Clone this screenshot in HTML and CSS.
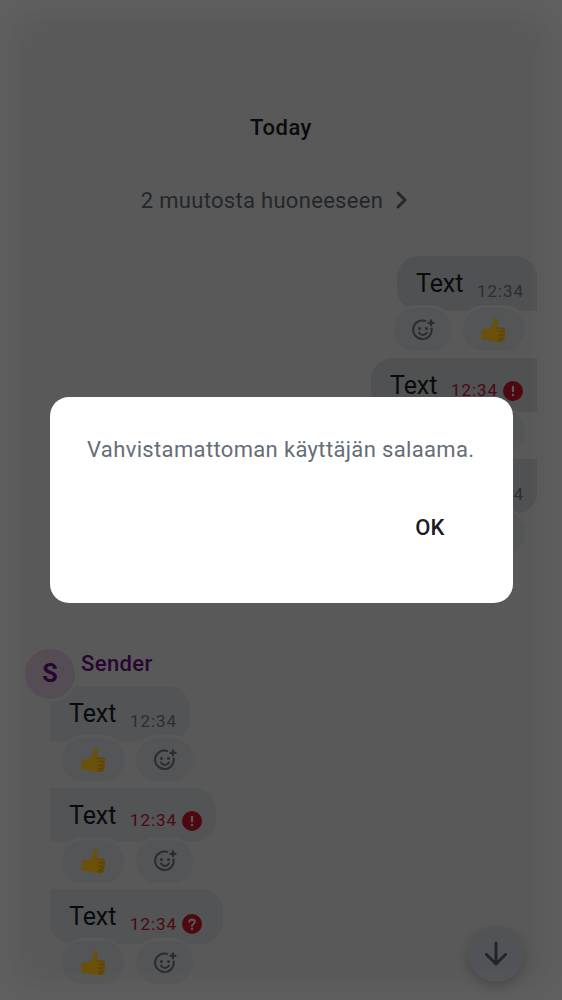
FILE: index.html
```html
<!DOCTYPE html>
<html lang="fi">
<head>
<meta charset="utf-8">
<title>Timeline</title>
<link rel="stylesheet" href="styles.css">
</head>
<body>
<svg class="defs" aria-hidden="true">
  <symbol id="react" viewBox="0 0 24 24">
    <path d="M15 3.200A9.300 9.300 0 1 0 20.500 9.800" fill="none" stroke="currentColor" stroke-width="2" stroke-linecap="butt"/>
    <circle cx="8.500" cy="10.500" r="1.500" fill="currentColor"/>
    <circle cx="15.500" cy="10.500" r="1.500" fill="currentColor"/>
    <path d="M8 14.500Q9.400 17 12 17T16 14.500" fill="none" stroke="currentColor" stroke-width="1.900" stroke-linecap="round"/>
    <path d="M20 2.300v5M17.500 4.800h5" fill="none" stroke="currentColor" stroke-width="2.200" stroke-linecap="round"/>
  </symbol>
  <symbol id="thumb" viewBox="0 0 24 26">
    <path d="M.8 13.500Q.4 12.400 1.500 12.300L7 12.500Q11.500 9.600 12.500 6.300L12.800 2Q13.200.3 14.900 1.100C17.300 2.500 17.200 6.800 15.700 10.400L22 10.700Q24.600 11.500 23.800 14.100Q25 15.300 23.800 17.500Q24.600 19.400 23.100 20.800Q23.800 22.600 22.200 24Q21.400 25 19.500 25H14Q10 24.800 7.500 22.800L1.800 23Q.4 23 .5 20Z" fill="#6a5009"/>
    <path d="M15.800 11.100h5.700q2 .1 2 1.500t-1.800 1.500h-4M17.500 14.900h4.600q1.500.1 1.500 1.300t-1.600 1.500h-4.300M17.400 18.700h4.200q1.500.2 1.400 1.400t-1.700 1.300h-3.600M17.300 22.200h3.500q1.200.2 1 1t-1.300.8H16" fill="none" stroke="#584007" stroke-width=".8"/>
  </symbol>
  <symbol id="error" viewBox="0 0 20 20">
    <circle cx="10" cy="10" r="10" fill="#4d0810"/>
    <path d="M10 5.800v4.400" stroke="#585b5e" stroke-width="2.200" stroke-linecap="round"/>
    <circle cx="10" cy="14" r="1.250" fill="#585b5e"/>
  </symbol>
  <symbol id="help" viewBox="0 0 20 20">
    <circle cx="10" cy="10" r="10" fill="#4d0810"/>
    <path d="M7.300 7.700Q7.700 5.400 10 5.400C13.700 5.500 13.300 8.800 11.400 10Q10.100 10.800 10 12" fill="none" stroke="#585b5e" stroke-width="2" stroke-linecap="round"/>
    <circle cx="10" cy="14.800" r="1.250" fill="#585b5e"/>
  </symbol>
</svg>
<div class="screen">
  <main class="timeline">
    <h1 class="day">Today</h1>
    <div class="changes"><span>2 muutosta huoneeseen</span>
      <svg class="chevron" viewBox="0 0 12 18"><path d="M2 2l7 7-7 7" fill="none" stroke="currentColor" stroke-width="3" stroke-linecap="round" stroke-linejoin="round"/></svg>
    </div>
    <section class="group outgoing">
      <article class="message">
        <div class="bubble first"><span class="body">Text</span><time>12:34</time></div>
        <div class="reactions"><span class="pill add"><svg><use href="#react"/></svg></span><span class="pill like"><svg><use href="#thumb"/></svg></span></div>
      </article>
      <article class="message">
        <div class="bubble middle failed"><span class="body">Text</span><time>12:34</time><svg class="status"><use href="#error"/></svg></div>
        <div class="reactions"><span class="pill add"><svg><use href="#react"/></svg></span><span class="pill like"><svg><use href="#thumb"/></svg></span></div>
      </article>
      <article class="message">
        <div class="bubble last"><span class="body">Text</span><time>12:34</time></div>
        <div class="reactions"><span class="pill add"><svg><use href="#react"/></svg></span><span class="pill like"><svg><use href="#thumb"/></svg></span></div>
      </article>
    </section>
    <section class="group incoming">
      <header class="sender"><span class="avatar">S</span><span class="name">Sender</span></header>
      <article class="message">
        <div class="bubble first"><span class="body">Text</span><time>12:34</time></div>
        <div class="reactions"><span class="pill like"><svg><use href="#thumb"/></svg></span><span class="pill add"><svg><use href="#react"/></svg></span></div>
      </article>
      <article class="message">
        <div class="bubble middle failed"><span class="body">Text</span><time>12:34</time><svg class="status"><use href="#error"/></svg></div>
        <div class="reactions"><span class="pill like"><svg><use href="#thumb"/></svg></span><span class="pill add"><svg><use href="#react"/></svg></span></div>
      </article>
      <article class="message">
        <div class="bubble last failed unknown"><span class="body">Text</span><time>12:34</time><svg class="status"><use href="#help"/></svg></div>
        <div class="reactions"><span class="pill like"><svg><use href="#thumb"/></svg></span><span class="pill add"><svg><use href="#react"/></svg></span></div>
      </article>
    </section>
  </main>
  <button class="jump" aria-label="Down"><svg viewBox="0 0 24 26"><path d="M12 2v21M2.500 13.500L12 23l9.500-9.500" fill="none" stroke="currentColor" stroke-width="3" stroke-linecap="round" stroke-linejoin="round"/></svg></button>
  <div class="scrim">
    <div class="dialog" role="dialog">
      <p class="notice">Vahvistamattoman käyttäjän salaama.</p>
      <button class="ok">OK</button>
    </div>
  </div>
</div>
</body>
</html>
```
FILE: styles.css
```css
* { box-sizing: border-box; }
body { margin: 0; background: #595959; font-family: Roboto, sans-serif; }
button { border: 0; padding: 0; font: inherit; }
.defs { position: absolute; width: 0; height: 0; }
.screen { position: relative; width: 562px; height: 1000px; overflow: hidden; background: #595959; }
.timeline { display: flex; flex-direction: column; padding: 113px 25px 0; }
.day { margin: 0; height: 30px; text-align: center; font-size: 22px; line-height: 30px; font-weight: 500; letter-spacing: .5px; color: #0a0b0c; }
.changes { display: flex; justify-content: center; align-items: center; gap: 13px; height: 30px; margin-top: 42px; padding-right: 13px; font-size: 22px; line-height: 29px; letter-spacing: .3px; color: #23272b; white-space: nowrap; }
.chevron { width: 12px; height: 18px; }
.group { display: flex; flex-direction: column; }
.outgoing { margin-top: 41px; align-items: flex-end; }
.message { display: flex; flex-direction: column; height: 101.5px; align-items: flex-start; }
.outgoing .message { align-items: flex-end; }
.bubble { display: flex; height: 54.500px; padding: 0 13px 0 19px; background: #4f5153; color: #0a0b0c; }
.incoming .bubble { background: #525456; }
.body { width: 61px; font-size: 25px; line-height: 56px; letter-spacing: -.05px; }
time { width: 47px; padding-top: 25px; font-size: 17px; line-height: 21px; letter-spacing: .9px; color: #2b2e31; white-space: nowrap; }
.failed time { color: #4d0810; padding-top: 22.500px; }
.unknown time { padding-top: 25px; }
.status { flex: none; width: 20px; height: 20px; margin: 23px 0 0 5px; }
.failed { padding-right: 14px; }
.unknown .status { margin-top: 25px; }
.unknown { padding-right: 20.500px; }
.outgoing .first { border-radius: 22px 22px 0 22px; }
.outgoing .middle { border-radius: 22px 0 0 22px; }
.outgoing .last { border-radius: 22px 0 22px 22px; }
.incoming .first { border-radius: 0 22px 22px 0; }
.incoming .middle { border-radius: 0 22px 22px 0; }
.incoming .last { border-radius: 0 22px 22px 22px; }
.reactions { display: flex; gap: 6px; margin-top: -5.500px; padding: 0 9.500px; }
.pill { display: flex; align-items: center; justify-content: center; height: 49px; border: 3px solid #595959; border-radius: 25px; background: #535557; color: #292d31; }
.like { width: 68px; }
.add { width: 62.500px; }
.add svg { width: 24px; height: 24px; margin-left: 1px; }
.like svg { width: 24px; height: 26px; margin-right: 1px; }
.incoming { margin-top: 87px; }
.incoming .reactions { padding: 0 9px; }
.sender { display: flex; height: 38.500px; gap: 3px; }
.avatar { z-index: 1; display: flex; align-items: center; justify-content: center; flex: none; width: 56px; height: 56px; margin: -2px 0 0 -3px; border: 3px solid #595959; border-radius: 50%; background: #544e54; color: #270630; font-size: 25px; font-weight: 700; }
.name { font-size: 22px; line-height: 32px; font-weight: 500; letter-spacing: .4px; color: #270630; }
.incoming .message { margin-left: 25px; }
.jump { position: absolute; right: 38px; bottom: 18.500px; display: flex; align-items: center; justify-content: center; width: 56px; height: 56px; border-radius: 50%; background: #515356; color: #202529; box-shadow: 0 5px 12px rgba(0, 0, 0, .2); }
.jump svg { width: 24px; height: 26px; }
.scrim { position: absolute; inset: 0; display: flex; align-items: center; justify-content: center; box-shadow: inset 0 0 36px 12px rgba(255, 255, 255, .05); }
.dialog { display: flex; flex-direction: column; width: 463px; height: 206px; padding: 38px 37.500px 0; border-radius: 19px; background: #fff; }
.notice { margin: 0; height: 30px; font-size: 22px; line-height: 30px; letter-spacing: .35px; color: #656d77; white-space: nowrap; }
.ok { align-self: flex-end; width: 92px; height: 50px; margin: 37px -1px 0 0; background: none; font-size: 22px; font-weight: 500; letter-spacing: .3px; color: #1b1d22; }
```
